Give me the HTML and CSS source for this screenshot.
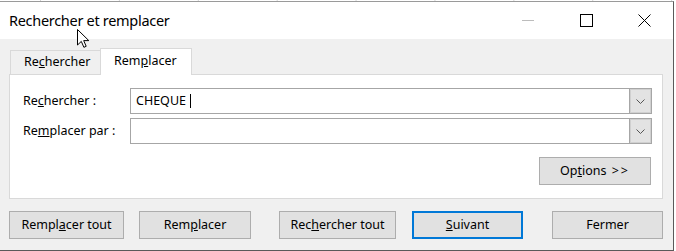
FILE: index.html
```html
<!DOCTYPE html>
<html lang="fr">
<head>
  <meta charset="UTF-8">
  <link rel="stylesheet" href="styles.css">
  <title>Rechercher et remplacer</title>
</head>
<body>

  <div class="window">
    <header class="titlebar">
      <h1 class="title">Rechercher et remplacer</h1>
      <div class="controls">
        <span class="control">
          <svg width="12" height="12" viewBox="0 0 12 12"><path d="M0 6.5h12" stroke="#bcbcbc" stroke-width="1"/></svg>
        </span>
        <span class="control">
          <svg width="13" height="13" viewBox="0 0 13 13"><rect x="0.5" y="0.5" width="12" height="12" fill="none" stroke="#000" stroke-width="1"/></svg>
        </span>
        <span class="control">
          <svg width="13" height="13" viewBox="0 0 13 13"><path d="M0.5 0.5l12 12M12.5 0.5l-12 12" stroke="#000" stroke-width="1"/></svg>
        </span>
      </div>
    </header>

    <main class="dialog">
      <nav class="tabs">
        <span class="tab">Re<u>c</u>hercher</span>
        <span class="tab tab-active">Rem<u>p</u>lacer</span>
      </nav>

      <section class="panel">
        <div class="field">
          <label class="field-label">Re<u>c</u>hercher :</label>
          <div class="combo">
            <span class="combo-text">CHEQUE<span class="caret"></span></span>
            <span class="combo-arrow">
              <svg width="9" height="5" viewBox="0 0 9 5"><path d="M0.5 0.5l4 4 4-4" fill="none" stroke="#555" stroke-width="1"/></svg>
            </span>
          </div>
        </div>
        <div class="field">
          <label class="field-label">Re<u>m</u>placer par :</label>
          <div class="combo">
            <span class="combo-text"></span>
            <span class="combo-arrow">
              <svg width="9" height="5" viewBox="0 0 9 5"><path d="M0.5 0.5l4 4 4-4" fill="none" stroke="#555" stroke-width="1"/></svg>
            </span>
          </div>
        </div>
        <div class="panel-footer">
          <button class="btn btn-options">Op<u>t</u>ions <span class="chevrons">&gt;&gt;</span></button>
        </div>
      </section>

      <div class="actions">
        <button class="btn btn-replace-all">Rempl<u>a</u>cer tout</button>
        <button class="btn btn-replace">Rem<u>p</u>lacer</button>
        <button class="btn btn-find-all">Rec<u>h</u>ercher tout</button>
        <button class="btn btn-next btn-default"><u>S</u>uivant</button>
        <button class="btn btn-close">Fermer</button>
      </div>
    </main>
  </div>

  <svg class="pointer" width="12" height="19" viewBox="0 0 12 19">
    <path d="M0.5 0.5v15.5l3.8-3.6 2.6 5.9 2.3-1-2.5-5.7h5.1z" fill="#fff" stroke="#000" stroke-width="1" stroke-linejoin="miter"/>
  </svg>

</body>
</html>
```

FILE: styles.css
```css
body {
  margin: 0;
  width: 676px;
  height: 251px;
  overflow: hidden;
  position: relative;
  background-color: #fff;
  background-image: linear-gradient(to right, #d4d4d4 1px, transparent 1px);
  background-size: 78.9px 100%;
  background-position: 40px 0;
  font-family: 'Noto Sans', 'Open Sans', sans-serif;
  font-size: 12.5px;
  color: #000;
}

.window {
  margin-top: 1px;
  width: 673px;
  height: 248px;
  border-top: 1px solid #9a9a9a;
  border-right: 1px solid #5a5a5a;
  border-bottom: 1px solid #5a5a5a;
  display: flex;
  flex-direction: column;
}

.titlebar {
  height: 37px;
  display: flex;
  align-items: center;
  justify-content: space-between;
  background-color: #fff;
}

.title {
  margin: 0 0 0 9px;
  font-size: 14.5px;
  font-weight: 400;
  letter-spacing: -0.3px;
  padding-bottom: 2px;
}

.controls {
  display: flex;
  height: 100%;
}

.control {
  width: 58px;
  display: flex;
  align-items: center;
  justify-content: center;
  padding-bottom: 1px;
}

.dialog {
  flex: 1;
  background-color: #f0f0f0;
  padding-top: 9px;
  padding-left: 9px;
}

.tabs {
  display: flex;
  height: 26px;
  padding-left: 1px;
  align-items: flex-end;
}

.tab {
  box-sizing: border-box;
  height: 24px;
  width: 90px;
  padding-left: 13px;
  line-height: 22px;
  border-top: 1px solid #d9d9d9;
  border-left: 1px solid #d9d9d9;
}

.tab-active {
  position: relative;
  z-index: 1;
  height: 27px;
  width: 92px;
  margin-bottom: -1px;
  padding-left: 13px;
  line-height: 24px;
  background-color: #fff;
  border-right: 1px solid #d9d9d9;
}

.panel {
  box-sizing: border-box;
  width: 654px;
  height: 125px;
  border: 1px solid #d9d9d9;
  background-color: #fff;
  padding: 13px 10px 0 13px;
  display: flex;
  flex-direction: column;
  gap: 4px;
}

.field {
  display: flex;
  align-items: center;
  height: 26px;
}

.field-label {
  width: 107px;
  padding-bottom: 1px;
}

.combo {
  box-sizing: border-box;
  flex: 1;
  height: 26px;
  border: 1px solid #a6a6a6;
  display: flex;
}

.combo-text {
  flex: 1;
  padding-left: 5px;
  line-height: 22px;
  display: flex;
  align-items: center;
}

.caret {
  display: inline-block;
  width: 1px;
  height: 14px;
  margin-left: 4px;
  background-color: #000;
}

.combo-arrow {
  box-sizing: border-box;
  width: 22px;
  background-color: #e3e3e3;
  border-left: 1px solid #a6a6a6;
  box-shadow: inset 0 0 0 1px #d0d0d0;
  display: flex;
  align-items: center;
  justify-content: center;
}

.panel-footer {
  display: flex;
  justify-content: flex-end;
  margin-top: 9px;
  padding-right: 1px;
}

.btn {
  box-sizing: border-box;
  height: 28px;
  padding: 0 0 1px;
  background-color: #e1e1e1;
  border: 1px solid #adadad;
  font-family: 'Noto Sans', 'Open Sans', sans-serif;
  font-size: 12.5px;
  color: #000;
}

.btn-options {
  width: 112px;
}

.chevrons {
  letter-spacing: 2px;
  margin-left: 2px;
}

.actions {
  display: flex;
  margin-top: 12px;
}

.btn-replace-all {
  width: 115px;
}

.btn-replace {
  width: 112px;
  margin-left: 15px;
}

.btn-find-all {
  width: 117px;
  margin-left: 28px;
}

.btn-next {
  width: 111px;
  margin-left: 16px;
}

.btn-default {
  border: 2px solid #0078d7;
}

.btn-close {
  width: 111px;
  margin-left: 29px;
}

.pointer {
  position: absolute;
  left: 77px;
  top: 29px;
}
```
